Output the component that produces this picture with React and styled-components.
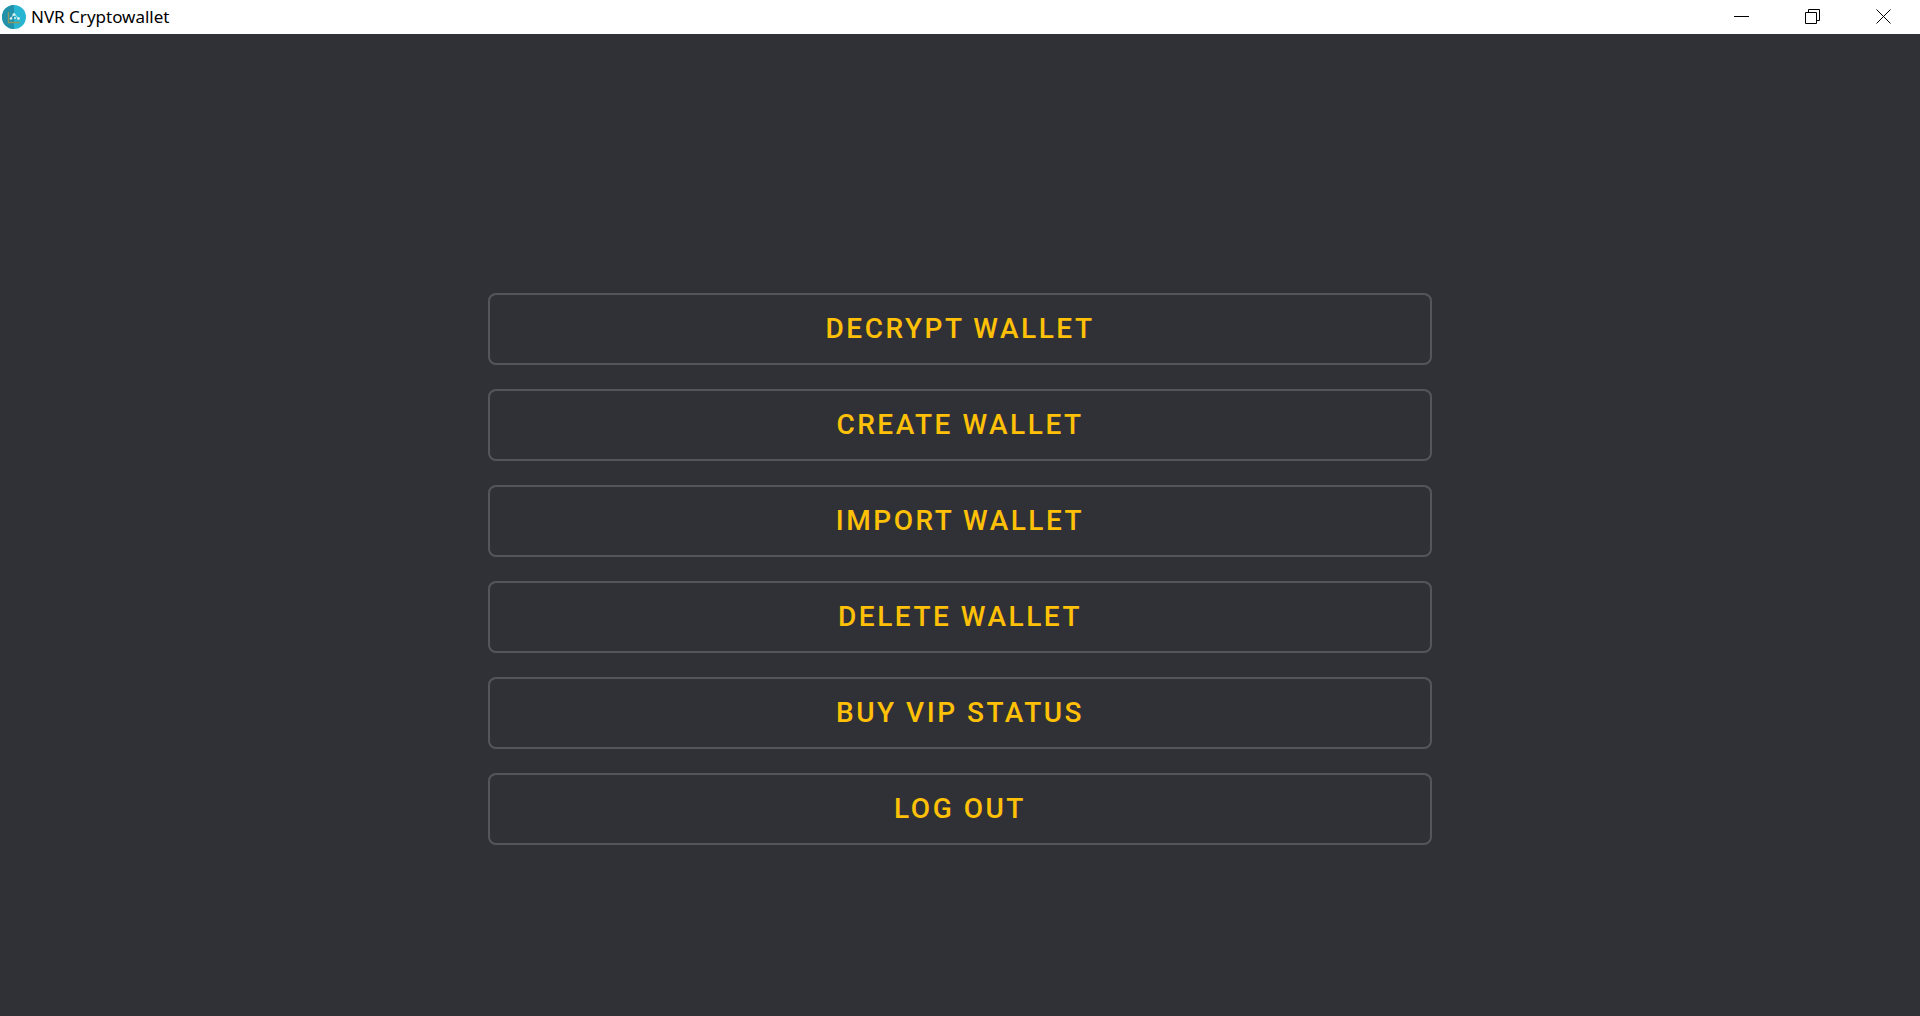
import React from "react";
import styled, { createGlobalStyle } from "styled-components";

const GlobalStyle = createGlobalStyle`
  * { box-sizing: border-box; }
  body { margin: 0; background: #303136; }
`;

const Window = styled.div`
  display: flex;
  flex-direction: column;
  min-height: 100vh;
  background: #303136;
`;

const TitleBar = styled.header`
  display: flex;
  align-items: center;
  height: 34px;
  padding: 0 1px 0 2px;
  background: #fff;
  color: #000;
`;

const Logo = styled.svg`
  width: 24px;
  height: 24px;
  flex: none;
`;

const Title = styled.h1`
  flex: 1;
  margin: 0 0 0 5px;
  font: 400 17px/24px "Noto Sans", "Open Sans", sans-serif;
`;

const Controls = styled.div`
  display: flex;
  height: 100%;
`;

const ControlButton = styled.button`
  display: flex;
  align-items: center;
  justify-content: center;
  width: 71px;
  padding: 0 0 1px;
  border: 0;
  background: transparent;
  color: #000;

  &:hover { background: #e5e5e5; }
`;

const Glyph = styled.svg`
  width: 15px;
  height: 15px;
  fill: none;
  stroke: currentColor;
  stroke-width: 1;
`;

const Main = styled.main`
  flex: 1;
  display: flex;
  align-items: center;
  justify-content: center;
  padding-top: 88px;
`;

const Menu = styled.nav`
  display: flex;
  flex-direction: column;
  gap: 24px;
  width: 944px;
  max-width: 100%;
`;

const MenuButton = styled.button`
  height: 72px;
  border: 2px solid #55565a;
  border-radius: 8px;
  background: transparent;
  color: #ffc107;
  font: 500 28px/32px Roboto, sans-serif;
  letter-spacing: 0.09em;
  text-transform: uppercase;
  cursor: pointer;

  &:hover { background: #3a3a37; }
`;

const actions = [
  "Decrypt wallet",
  "Create wallet",
  "Import wallet",
  "Delete wallet",
  "Buy VIP status",
  "Log out",
];

function AppLogo() {
  return (
    <Logo viewBox="0 0 24 24" aria-hidden="true">
      <circle cx="12" cy="12" r="12" fill="#27b5d1" />
      <path d="M12 0a12 12 0 0 0 0 24z" fill="#2391a9" />
      <path d="M6.5 7v10.500H18" fill="none" stroke="#8d9a62" strokeWidth="1.300" />
      <path d="M8.500 14l3-4.500 2 .5 3 4" fill="none" stroke="#b5dce5" strokeWidth="1" />
      <g fill="#d5edf2">
        <circle cx="9" cy="13.500" r="1.300" />
        <circle cx="12" cy="9.500" r="1.500" />
        <circle cx="13" cy="13" r="1.100" />
        <circle cx="16.500" cy="13.500" r="1.400" />
      </g>
    </Logo>
  );
}

export default function App() {
  return (
    <Window>
      <GlobalStyle />
      <TitleBar>
        <AppLogo />
        <Title>NVR Cryptowallet</Title>
        <Controls>
          <ControlButton type="button" aria-label="Minimize">
            <Glyph viewBox="0 0 15 15"><path d="M0 7.500h15" /></Glyph>
          </ControlButton>
          <ControlButton type="button" aria-label="Restore">
            <Glyph viewBox="0 0 15 15">
              <path d="M.5 3.500h11v11H.5zM3.500 3.500v-3h11v11h-3" />
            </Glyph>
          </ControlButton>
          <ControlButton type="button" aria-label="Close">
            <Glyph viewBox="0 0 15 15"><path d="M.5.5l14 14M14.500.5l-14 14" /></Glyph>
          </ControlButton>
        </Controls>
      </TitleBar>
      <Main>
        <Menu aria-label="Wallet actions">
          {actions.map((label) => (
            <MenuButton key={label} type="button">{label}</MenuButton>
          ))}
        </Menu>
      </Main>
    </Window>
  );
}
